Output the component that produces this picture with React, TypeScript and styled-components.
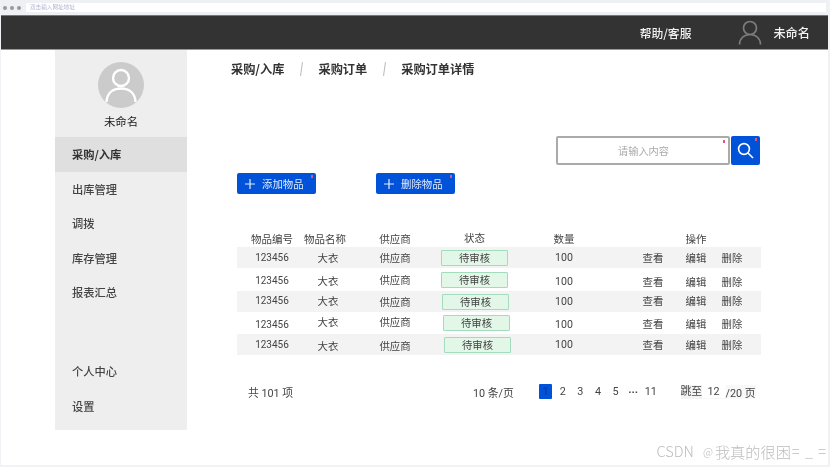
import React from "react";
import styled, { createGlobalStyle } from "styled-components";

const Global = createGlobalStyle`
  html, body { margin: 0; padding: 0; background: #fff; }
  body { font-family: "Noto Sans CJK SC", "Noto Sans", sans-serif; color: #333; }
`;

const Page = styled.div`
  position: relative;
  width: 830px;
  height: 467px;
  overflow: hidden;
  background: #fff;
  box-sizing: border-box;
  border-left: 1px solid #f1f1f6;
  border-right: 2px solid #f1f1f6;
  border-bottom: 2px solid #f1f1f6;
  display: flex;
  flex-direction: column;
  filter: blur(0.3px);
`;

const BrowserBar = styled.div`
  height: 16px;
  box-sizing: border-box;
  margin: 0 -2px 0 -1px;
  flex: none;
  background: #eff0f4;
  display: flex;
  align-items: center;
  padding: 0 4px 0 3px;
  gap: 3px;
  border-bottom: 1px solid #777;
`;
const Dot = styled.span`
  width: 4px;
  height: 4px;
  border-radius: 50%;
  background: #999;
`;
const Address = styled.div`
  flex: 1;
  height: 9px;
  margin-left: 2px;
  background: #fff;
  font-size: 5.6px;
  line-height: 9px;
  padding-left: 4px;
  color: #b4b4d2;
`;

const TopBar = styled.header`
  height: 34px;
  box-sizing: border-box;
  flex: none;
  margin: 0 -2px 0 -1px;
  background: #333;
  color: #f2f2f2;
  display: flex;
  align-items: center;
  justify-content: flex-end;
  padding-right: 20px;
  font-size: 12.2px;
  font-weight: 500;
  border-bottom: 1px solid #999;
`;
const Help = styled.span`
  margin-right: 47px;
  font-size: 11.8px;
`;
const TopName = styled.span`
  margin-left: 11px;
`;

const Body = styled.div`
  flex: 1;
  display: flex;
  padding-left: 54px;
  align-items: flex-start;
`;

const Sidebar = styled.aside`
  width: 132px;
  height: 380px;
  flex: none;
  background: #eee;
  display: flex;
  flex-direction: column;
  font-size: 11.25px;
`;
const Profile = styled.div`
  height: 87px;
  display: flex;
  flex-direction: column;
  align-items: center;
  padding-top: 12px;
  box-sizing: border-box;
`;
const ProfileName = styled.div`
  margin-top: 5px;
  font-size: 11.4px;
  line-height: 16px;
  color: #222;
`;
const NavItem = styled.div<{ $active?: boolean }>`
  height: 34.6px;
  line-height: 34px;
  padding-left: 17px;
  flex: none;
  color: ${(p) => (p.$active ? "#333" : "#444")};
  background: ${(p) => (p.$active ? "#dfdfdf" : "transparent")};
  font-weight: ${(p) => (p.$active ? 600 : 500)};
`;
const NavGap = styled.div`
  height: 44px;
  flex: none;
`;

const Main = styled.main`
  margin-left: 50px;
  width: 524px;
  display: flex;
  flex-direction: column;
`;

const Crumbs = styled.nav`
  margin: 10px 0 0 -6px;
  height: 18px;
  display: flex;
  align-items: center;
  font-size: 12.2px;
  font-weight: 700;
  color: #333;
`;
const CrumbSep = styled.span`
  width: 1px;
  height: 14px;
  margin: 0 16px 0 17px;
  background: #bbb;
  transform: rotate(8deg);
`;

const SearchRow = styled.div`
  margin-top: 58px;
  height: 29px;
  display: flex;
  justify-content: flex-end;
  gap: 1px;
`;
const SearchBox = styled.div`
  position: relative;
  width: 174px;
  box-sizing: border-box;
  border: 2px solid #aaa;
  border-radius: 2px;
  font-size: 10.2px;
  color: #aaa;
  display: flex;
  align-items: center;
  justify-content: center;
  padding-left: 1px;
`;
const SearchButton = styled.div`
  position: relative;
  width: 29px;
  background: #0052d9;
  border-radius: 2px;
  display: flex;
  align-items: center;
  justify-content: center;
  margin-right: 1px;
`;
const Mark = styled.i`
  position: absolute;
  top: 2px;
  right: 3px;
  width: 2px;
  height: 3px;
  background: #e2557f;
`;

const Actions = styled.div`
  margin-top: 8px;
  height: 21px;
  display: flex;
  gap: 60px;
`;
const ActionButton = styled.div`
  position: relative;
  width: 79px;
  height: 21px;
  box-sizing: border-box;
  padding-left: 7px;
  background: #0052d9;
  border-radius: 2px;
  color: #e4ebfb;
  font-size: 10.4px;
  display: flex;
  align-items: center;
  gap: 6px;
`;

const columns = "70px 42px 92px 67px 112px 66px 20px 52px";

const HeadRow = styled.div`
  margin-top: 36px;
  height: 17px;
  display: grid;
  grid-template-columns: ${columns};
  align-items: center;
  justify-items: center;
  font-size: 10.5px;
  color: #444;
`;
const TableRow = styled.div<{ $h: number; $shade: boolean }>`
  height: ${(p) => p.$h}px;
  display: grid;
  grid-template-columns: ${columns};
  align-items: center;
  justify-items: center;
  background: ${(p) => (p.$shade ? "#f3f3f3" : "#fff")};
  font-size: 10.4px;
  color: #444;
`;
const Cell = styled.span<{ $dy?: number }>`
  margin-top: ${(p) => (p.$dy ?? 0) * 2 - 1}px;
  white-space: nowrap;
`;
const HeadName = styled(Cell)`
  margin-left: -6px;
`;
const Code = styled.span<{ $dy?: number; $size?: number }>`
  margin-top: ${(p) => (p.$dy ?? 0) * 2}px;
  font-family: Roboto, "Noto Sans", sans-serif;
  font-size: ${(p) => p.$size ?? 10}px;
`;
const Tag = styled.span<{ $dx: number; $dy: number }>`
  width: 67px;
  height: 16px;
  box-sizing: border-box;
  margin-left: ${(p) => p.$dx * 2}px;
  margin-right: -${(p) => p.$dx * 2}px;
  margin-top: ${(p) => p.$dy * 2}px;
  background: #e3f7e8;
  border: 1px solid #a3dcbc;
  border-radius: 1px;
  color: #444;
  font-size: 10.4px;
  line-height: 14px;
  text-align: center;
`;

const Pager = styled.div`
  margin-top: 29px;
  height: 15px;
  display: flex;
  align-items: center;
  font-family: Roboto, "Noto Sans CJK SC", sans-serif;
  font-size: 10.8px;
  color: #444;
`;
const Total = styled.span`
  margin-left: 11px;
  width: 225px;
`;
const PerPage = styled.span`
  width: 66px;
`;
const PageNum = styled.span<{ $active?: boolean }>`
  width: ${(p) => (p.$active ? "13px" : "17.6px")};
  height: 15px;
  line-height: 15px;
  text-align: center;
  background: ${(p) => (p.$active ? "#0052d9" : "transparent")};
  color: ${(p) => (p.$active ? "#0a3a8f" : "#444")};
  border-radius: 1px;
  margin-right: ${(p) => (p.$active ? "2px" : "0")};
`;
const Ellipsis = styled(PageNum)`
  font-weight: 700;
  line-height: 18px;
`;
const Jump = styled.div`
  margin-left: 21px;
  display: flex;
  align-items: center;
  height: 14px;
  background: #f8f8f8;
`;
const JumpLabel = styled.span`
  width: 21px;
  background: #f3f3f3;
  line-height: 14px;
  overflow: hidden;
  white-space: nowrap;
`;
const JumpInput = styled.span`
  width: 24px;
  text-align: center;
  background: #fff;
`;

const Watermark = styled.div`
  position: absolute;
  right: 2px;
  bottom: 5px;
  display: flex;
  align-items: center;
  font-size: 14.6px;
  line-height: 18px;
  font-weight: 300;
  color: #bdbdbd;
  white-space: nowrap;
`;
const WatermarkAt = styled.span`
  margin-left: 9px;
  font-size: 11px;
  margin-right: 2px;
`;
const WatermarkName = styled.span`
  font-size: 15.2px;
`;
const WatermarkTail = styled.span`
  margin-left: 1px;
  word-spacing: 2px;
`;

const rows = [
  { h: 21, id: 0, name: 0, sup: 0.5, tx: 0, ty: 0, num: 0, act: 0 },
  { h: 23, id: 1, name: 1.5, sup: 0, tx: 0, ty: 0, num: 1.5, act: 2 },
  { h: 21, id: -1, name: -1, sup: 0, tx: 0.5, ty: 0, num: -0.5, act: -0.5 },
  { h: 22, id: 1, name: -1, sup: -1, tx: 1, ty: 0, num: 1, act: 1 },
  { h: 21, id: 0, name: 1.5, sup: 1.5, tx: 1.5, ty: 0.5, num: 0, act: 0 },
];

const nav = ["出库管理", "调拨", "库存管理", "报表汇总"];

const Plus = () => (
  <svg width="12" height="12" viewBox="0 0 12 12" fill="none" stroke="#e4ebfb" strokeWidth="1.2">
    <path d="M6 1v10M1 6h10" />
  </svg>
);

export default function App() {
  return (
    <>
      <Global />
      <Page>
        <BrowserBar>
          <Dot />
          <Dot />
          <Dot />
          <Address>双击输入网址地址</Address>
        </BrowserBar>
        <TopBar>
          <Help>帮助/客服</Help>
          <svg width="24" height="25" viewBox="0 0 24 25" fill="none" stroke="#7d7d7d" strokeWidth="1.7">
            <circle cx="12" cy="8" r="6.5" />
            <path d="M1.5 24.5C1.5 18.5 6 14.5 12 14.5S22.5 18.5 22.5 24.5" />
          </svg>
          <TopName>未命名</TopName>
        </TopBar>
        <Body>
          <Sidebar>
            <Profile>
              <svg width="46" height="46" viewBox="0 0 46 46" fill="none">
                <circle cx="23" cy="23" r="23" fill="#cbcbcb" />
                <circle cx="23" cy="16" r="8" stroke="#fff" strokeWidth="2.4" />
                <path d="M8.5 40C9 31 15 26.5 23 26.5S37 31 37.5 40" stroke="#fff" strokeWidth="2.4" />
              </svg>
              <ProfileName>未命名</ProfileName>
            </Profile>
            <NavItem $active>采购/入库</NavItem>
            {nav.map((n) => (
              <NavItem key={n}>{n}</NavItem>
            ))}
            <NavGap />
            <NavItem>个人中心</NavItem>
            <NavItem>设置</NavItem>
          </Sidebar>
          <Main>
            <Crumbs>
              <span>采购/入库</span>
              <CrumbSep />
              <span>采购订单</span>
              <CrumbSep />
              <span>采购订单详情</span>
            </Crumbs>
            <SearchRow>
              <SearchBox>
                请输入内容
                <Mark />
              </SearchBox>
              <SearchButton>
                <svg width="17" height="17" viewBox="0 0 17 17" fill="none" stroke="#fff" strokeWidth="1.6">
                  <circle cx="7" cy="7" r="5.4" />
                  <path d="M11 11l5 5" />
                </svg>
                <Mark />
              </SearchButton>
            </SearchRow>
            <Actions>
              <ActionButton>
                <Plus />
                添加物品
                <Mark />
              </ActionButton>
              <ActionButton>
                <Plus />
                删除物品
                <Mark />
              </ActionButton>
            </Actions>
            <HeadRow>
              <Cell>物品编号</Cell>
              <HeadName>物品名称</HeadName>
              <Cell $dy={0.5}>供应商</Cell>
              <Cell $dy={-1}>状态</Cell>
              <Cell>数量</Cell>
              <span />
              <Cell $dy={0.5}>操作</Cell>
              <span />
            </HeadRow>
            {rows.map((r, i) => (
              <TableRow key={i} $h={r.h} $shade={i % 2 === 0}>
                <Code $dy={r.id}>123456</Code>
                <Cell $dy={r.name}>大衣</Cell>
                <Cell $dy={r.sup}>供应商</Cell>
                <Tag $dx={r.tx} $dy={r.ty}>待审核</Tag>
                <Code $dy={r.num} $size={10.6}>100</Code>
                <Cell $dy={r.act}>查看</Cell>
                <Cell $dy={r.act}>编辑</Cell>
                <Cell $dy={r.act}>删除</Cell>
              </TableRow>
            ))}
            <Pager>
              <Total>共 101 项</Total>
              <PerPage>10 条/页</PerPage>
              <PageNum $active>1</PageNum>
              <PageNum>2</PageNum>
              <PageNum>3</PageNum>
              <PageNum>4</PageNum>
              <PageNum>5</PageNum>
              <Ellipsis>···</Ellipsis>
              <PageNum>11</PageNum>
              <Jump>
                <JumpLabel>跳至</JumpLabel>
                <JumpInput>12</JumpInput>
                <span>/20 页</span>
              </Jump>
            </Pager>
          </Main>
        </Body>
        <Watermark>
          CSDN
          <WatermarkAt>@</WatermarkAt>
          <WatermarkName>我真的很困</WatermarkName>
          <WatermarkTail>= _ =</WatermarkTail>
        </Watermark>
      </Page>
    </>
  );
}
